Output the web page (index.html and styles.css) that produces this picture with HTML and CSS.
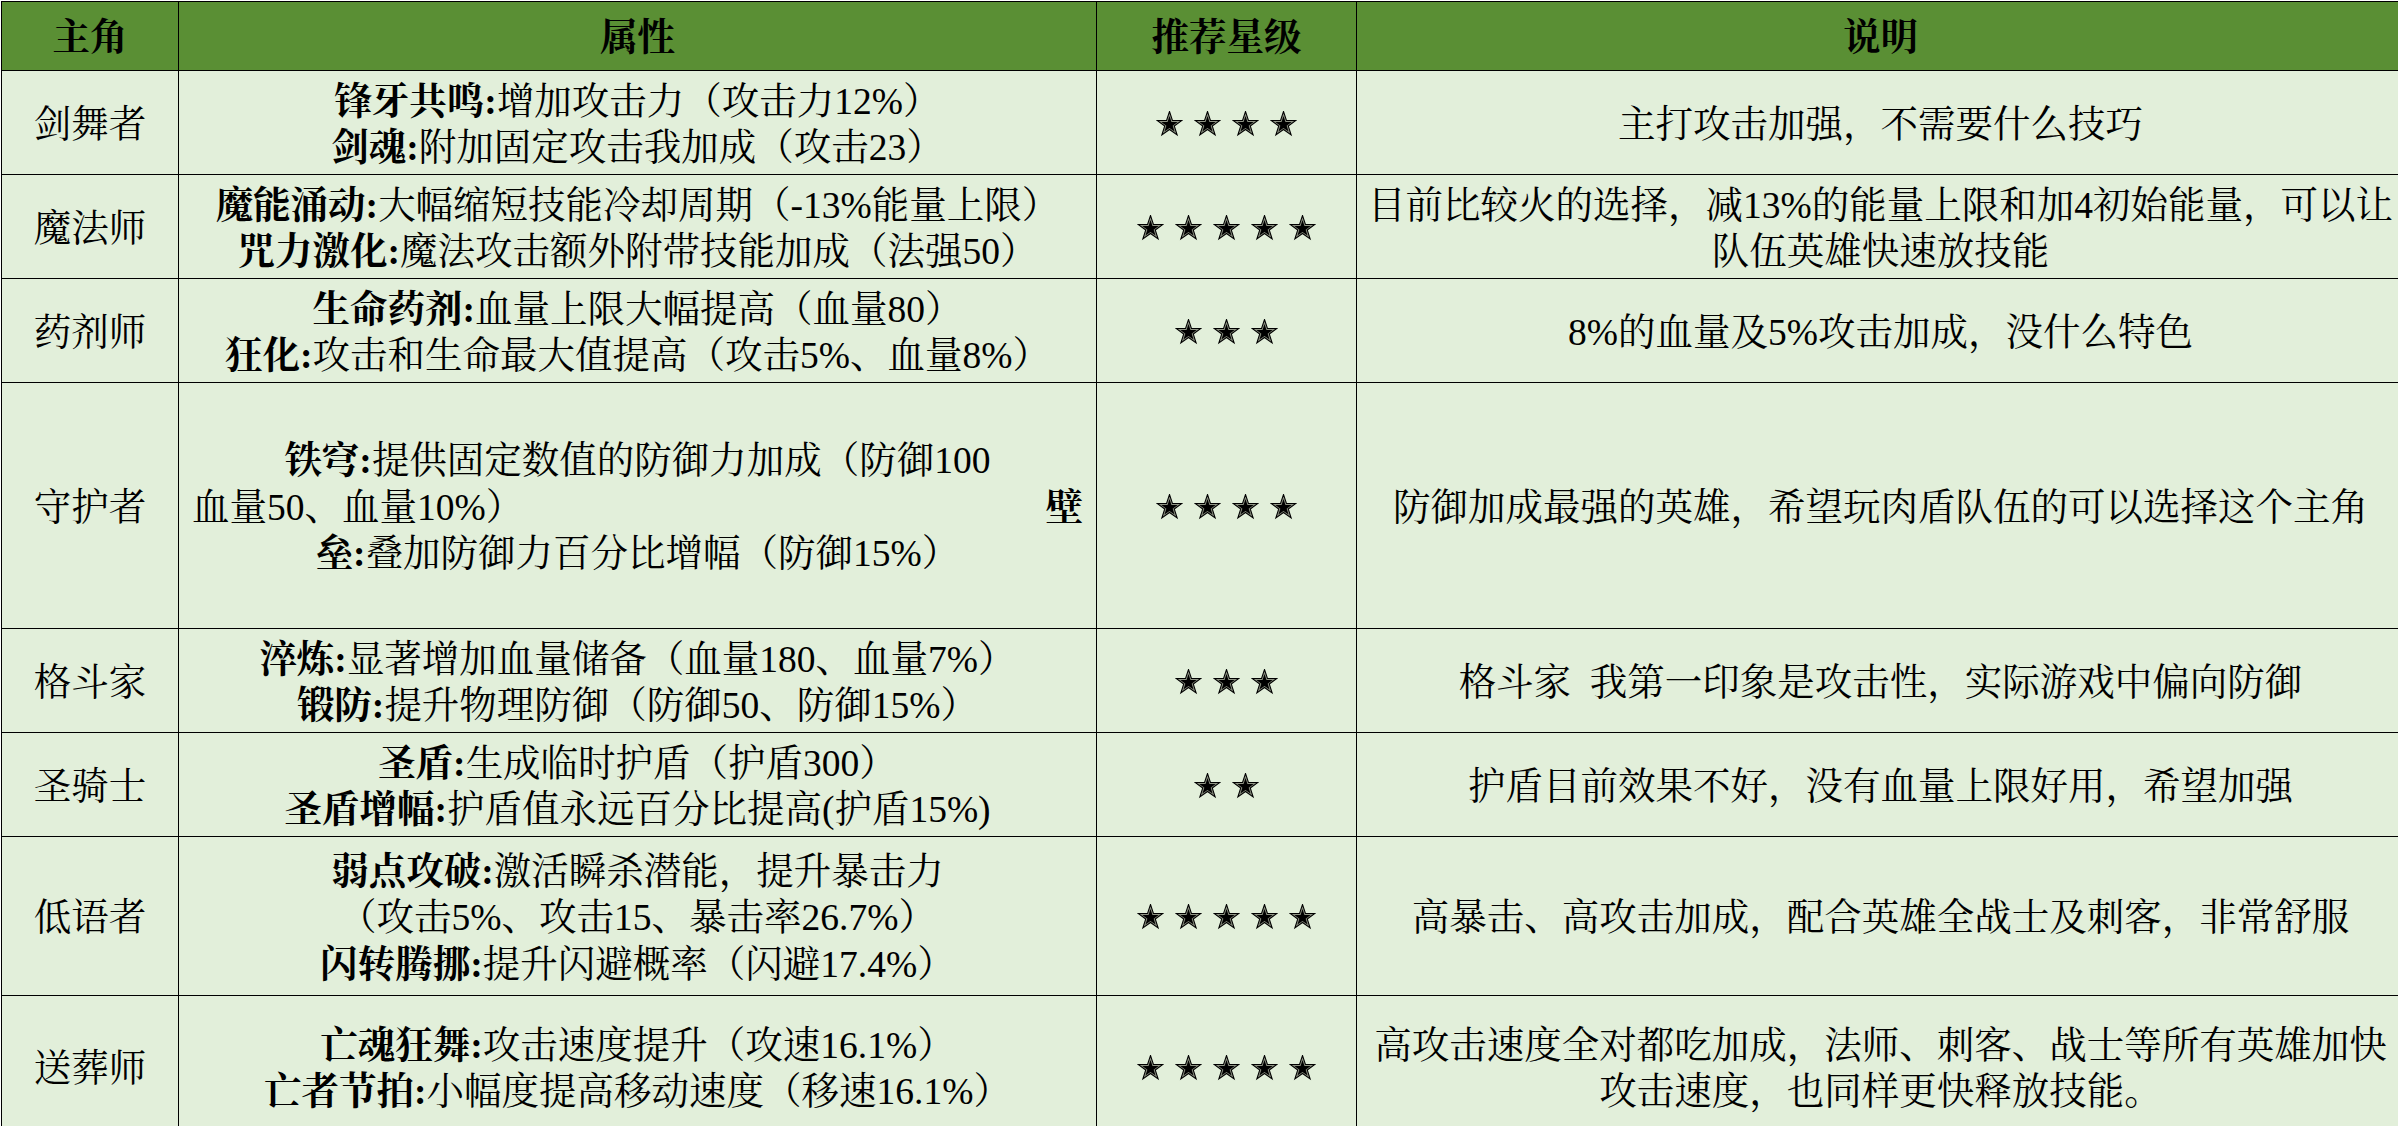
FILE: index.html
```html
<!DOCTYPE html>
<html lang="zh-CN">
<head>
<meta charset="utf-8">
<title>主角推荐</title>
<link rel="stylesheet" href="styles.css">
</head>
<body>
<svg class="defs" width="0" height="0" aria-hidden="true">
  <symbol id="star" viewBox="0 0 28 27">
    <path d="M14 0.5 L17.06 9.79 L26.84 9.83 L18.95 15.61 L21.94 24.92 L14 19.2 L6.06 24.92 L9.05 15.61 L1.16 9.83 L10.94 9.79 Z" fill="#8f9484" stroke="#000" stroke-width="1.1" stroke-linejoin="miter"/>
    <path d="M14 0.5 L17.06 9.79 L26.84 9.83 L18.95 15.61 L21.94 24.92 L14 19.2 L6.06 24.92 L9.05 15.61 L1.16 9.83 L10.94 9.79 Z" fill="#000" transform="translate(14 14.6) scale(0.66) translate(-14 -14.6)"/>
  </symbol>
</svg>
<table class="grid">
  <colgroup>
    <col class="c-role">
    <col class="c-attr">
    <col class="c-star">
    <col class="c-desc">
  </colgroup>
  <thead>
    <tr class="r-head">
      <th>主角</th>
      <th>属性</th>
      <th>推荐星级</th>
      <th>说明</th>
    </tr>
  </thead>
  <tbody>
    <tr class="r-std">
      <td>剑舞者</td>
      <td class="attr">
        <div class="ln"><b>锋牙共鸣:</b>增加攻击力（攻击力12%）</div>
        <div class="ln"><b>剑魂:</b>附加固定攻击我加成（攻击23）</div>
      </td>
      <td class="rate"><div class="stars"><svg class="star"><use href="#star"/></svg><svg class="star"><use href="#star"/></svg><svg class="star"><use href="#star"/></svg><svg class="star"><use href="#star"/></svg></div></td>
      <td>主打攻击加强，不需要什么技巧</td>
    </tr>
    <tr class="r-std">
      <td>魔法师</td>
      <td class="attr">
        <div class="ln"><b>魔能涌动:</b>大幅缩短技能冷却周期（-13%能量上限）</div>
        <div class="ln"><b>咒力激化:</b>魔法攻击额外附带技能加成（法强50）</div>
      </td>
      <td class="rate"><div class="stars"><svg class="star"><use href="#star"/></svg><svg class="star"><use href="#star"/></svg><svg class="star"><use href="#star"/></svg><svg class="star"><use href="#star"/></svg><svg class="star"><use href="#star"/></svg></div></td>
      <td>目前比较火的选择，减13%的能量上限和加4初始能量，可以让队伍英雄快速放技能</td>
    </tr>
    <tr class="r-std">
      <td>药剂师</td>
      <td class="attr">
        <div class="ln"><b>生命药剂:</b>血量上限大幅提高（血量80）</div>
        <div class="ln"><b>狂化:</b>攻击和生命最大值提高（攻击5%、血量8%）</div>
      </td>
      <td class="rate"><div class="stars"><svg class="star"><use href="#star"/></svg><svg class="star"><use href="#star"/></svg><svg class="star"><use href="#star"/></svg></div></td>
      <td>8%的血量及5%攻击加成，没什么特色</td>
    </tr>
    <tr class="r-tall">
      <td>守护者</td>
      <td class="attr">
        <div class="ln"><b>铁穹:</b>提供固定数值的防御力加成（防御100</div>
        <div class="ln split"><span>血量50、血量10%）</span><b>壁</b></div>
        <div class="ln"><b>垒:</b>叠加防御力百分比增幅（防御15%）</div>
      </td>
      <td class="rate"><div class="stars"><svg class="star"><use href="#star"/></svg><svg class="star"><use href="#star"/></svg><svg class="star"><use href="#star"/></svg><svg class="star"><use href="#star"/></svg></div></td>
      <td>防御加成最强的英雄，希望玩肉盾队伍的可以选择这个主角</td>
    </tr>
    <tr class="r-std">
      <td>格斗家</td>
      <td class="attr">
        <div class="ln"><b>淬炼:</b>显著增加血量储备（血量180、血量7%）</div>
        <div class="ln"><b>锻防:</b>提升物理防御（防御50、防御15%）</div>
      </td>
      <td class="rate"><div class="stars"><svg class="star"><use href="#star"/></svg><svg class="star"><use href="#star"/></svg><svg class="star"><use href="#star"/></svg></div></td>
      <td>格斗家&nbsp;&nbsp;我第一印象是攻击性，实际游戏中偏向防御</td>
    </tr>
    <tr class="r-std">
      <td>圣骑士</td>
      <td class="attr">
        <div class="ln"><b>圣盾:</b>生成临时护盾（护盾300）</div>
        <div class="ln"><b>圣盾增幅:</b>护盾值永远百分比提高(护盾15%)</div>
      </td>
      <td class="rate"><div class="stars"><svg class="star"><use href="#star"/></svg><svg class="star"><use href="#star"/></svg></div></td>
      <td>护盾目前效果不好，没有血量上限好用，希望加强</td>
    </tr>
    <tr class="r-three">
      <td>低语者</td>
      <td class="attr">
        <div class="ln"><b>弱点攻破:</b>激活瞬杀潜能，提升暴击力</div>
        <div class="ln">（攻击5%、攻击15、暴击率26.7%）</div>
        <div class="ln"><b>闪转腾挪:</b>提升闪避概率（闪避17.4%）</div>
      </td>
      <td class="rate"><div class="stars"><svg class="star"><use href="#star"/></svg><svg class="star"><use href="#star"/></svg><svg class="star"><use href="#star"/></svg><svg class="star"><use href="#star"/></svg><svg class="star"><use href="#star"/></svg></div></td>
      <td>高暴击、高攻击加成，配合英雄全战士及刺客，非常舒服</td>
    </tr>
    <tr class="r-last">
      <td>送葬师</td>
      <td class="attr">
        <div class="ln"><b>亡魂狂舞:</b>攻击速度提升（攻速16.1%）</div>
        <div class="ln"><b>亡者节拍:</b>小幅度提高移动速度（移速16.1%）</div>
      </td>
      <td class="rate"><div class="stars"><svg class="star"><use href="#star"/></svg><svg class="star"><use href="#star"/></svg><svg class="star"><use href="#star"/></svg><svg class="star"><use href="#star"/></svg><svg class="star"><use href="#star"/></svg></div></td>
      <td>高攻击速度全对都吃加成，法师、刺客、战士等所有英雄加快攻击速度，也同样更快释放技能。</td>
    </tr>
  </tbody>
</table>
</body>
</html>
```

FILE: styles.css
```css
html, body {
  margin: 0;
  padding: 0;
  overflow: hidden;
  background: #ffffff;
}

body {
  font-family: "Liberation Serif", "Noto Serif CJK SC", "Noto Sans CJK SC", serif;
  font-size: 37.5px;
  line-height: 46.5px;
  color: #000;
}

.defs {
  position: absolute;
  width: 0;
  height: 0;
  overflow: hidden;
}

.grid {
  border-collapse: separate;
  border-spacing: 0;
  table-layout: fixed;
  width: 2404px;
  margin: 1px 0 0 1px;
  border-top: 1px solid #000;
  border-left: 1px solid #000;
}

.c-role { width: 177px; }
.c-attr { width: 918px; }
.c-star { width: 260px; }
.c-desc { width: 1048px; }

.grid th,
.grid td {
  border-right: 1px solid #000;
  border-bottom: 1px solid #000;
  padding: 5px 5px 0;
  text-align: center;
  vertical-align: middle;
  background: #e2efda;
  font-weight: 400;
}

.grid td.rate {
  padding: 2px 5px 0;
}

.grid th {
  background: #5a8f34;
  font-weight: 700;
}

.grid b {
  font-weight: 700;
}

.r-head { height: 69px; }
.r-std { height: 104px; }
.r-tall { height: 246px; }
.r-three { height: 159px; }
.r-last { height: 142px; }

.attr .ln {
  white-space: nowrap;
}

.attr .split {
  display: flex;
  justify-content: space-between;
  margin: 0 8px;
}

.stars {
  display: flex;
  justify-content: center;
  align-items: center;
  gap: 11px;
}

.star {
  width: 27px;
  height: 26px;
  display: block;
}
```
